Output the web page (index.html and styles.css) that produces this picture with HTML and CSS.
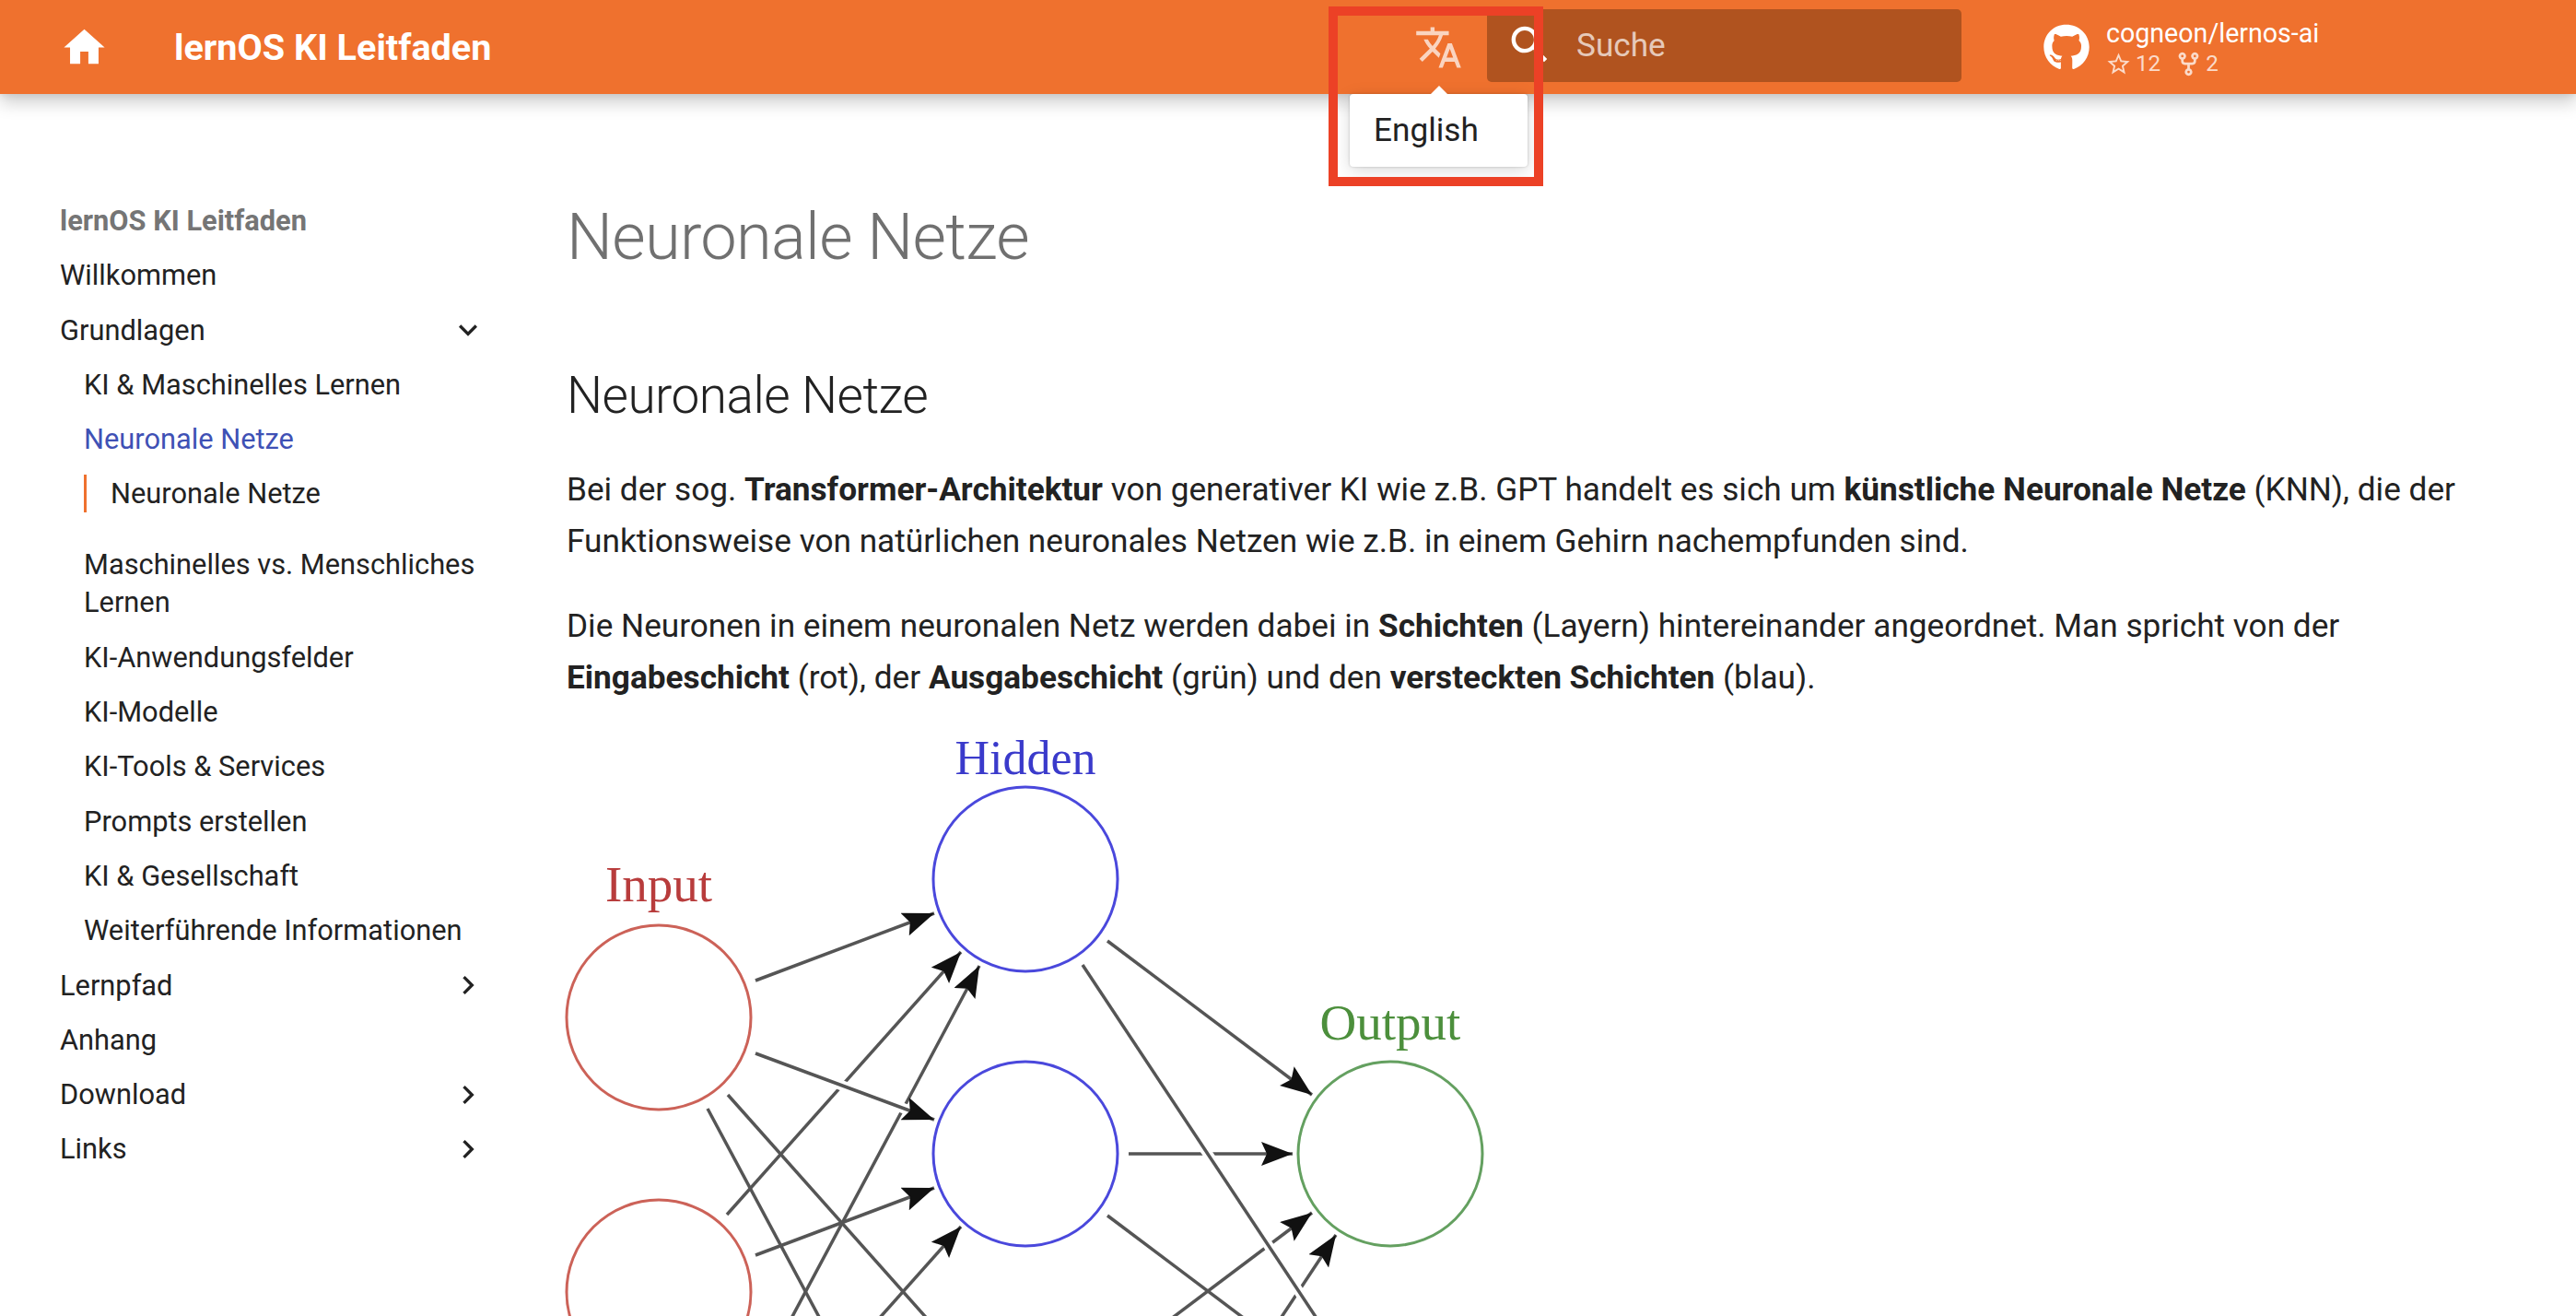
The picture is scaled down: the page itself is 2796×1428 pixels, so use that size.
FILE: index.html
```html
<!DOCTYPE html>
<html lang="de">

<head>
    <meta charset="UTF-8">
    <meta name="viewport" content="width=device-width, initial-scale=1.0">
    <title>Neuronale Netze - lernOS KI Leitfaden</title>
    <link rel="stylesheet" href="styles.css">
</head>

<body>
    <header class="header">
        <a class="home" href="#">
            <svg class="icon" viewBox="0 0 24 24"><path d="M10 20v-6h4v6h5v-8h3L12 3 2 12h3v8h5z"/></svg>
        </a>
        <div class="site-title">lernOS KI Leitfaden</div>

        <div class="lang">
            <svg class="icon" viewBox="0 0 24 24"><path d="M12.87 15.07l-2.54-2.51.03-.03c1.74-1.94 2.98-4.17 3.71-6.53H17V4h-7V2H8v2H1v1.99h11.17C11.5 7.92 10.44 9.75 9 11.35 8.07 10.32 7.3 9.19 6.69 8h-2c.73 1.63 1.73 3.17 2.98 4.56l-5.09 5.02L4 19l5-5 3.11 3.11.76-2.04zM18.5 10h-2L12 22h2l1.12-3h4.75L21 22h2l-4.5-12zm-2.62 7l1.62-4.33L19.12 17h-3.24z"/></svg>
            <div class="lang-menu">English</div>
        </div>

        <div class="search">
            <svg class="icon" viewBox="0 0 24 24"><path d="M15.5 14h-.79l-.28-.27A6.471 6.471 0 0 0 16 9.5 6.5 6.5 0 1 0 9.5 16c1.61 0 3.09-.59 4.23-1.57l.27.28v.79l5 4.99L20.49 19l-4.99-5zm-6 0C7.01 14 5 11.99 5 9.5S7.01 5 9.5 5 14 7.01 14 9.5 11.99 14 9.5 14z"/></svg>
            <span class="search-label">Suche</span>
        </div>

        <a class="repo" href="#">
            <svg class="repo-logo" viewBox="0 0 496 512"><path d="M165.9 397.4c0 2-2.3 3.6-5.2 3.6-3.3 0-5.6-1.6-5.6-3.6 0-2 2.3-3.6 5.2-3.6 3-.3 5.6 1.3 5.6 3.6zm-31.1-4.5c-.7 2 1.3 4.3 4.3 4.9 2.6 1 5.6 0 6.2-2s-1.3-4.3-4.3-5c-2.6-.7-5.5.3-6.2 2.1zm44.2-1.7c-2.9.7-4.9 2.6-4.6 4.9.3 2 2.9 3.3 5.9 2.6 2.9-.7 4.9-2.6 4.6-4.6-.3-1.9-3-3.2-5.9-2.9zM244.8 8C106.1 8 0 113.3 0 252c0 110.9 69.8 205.8 169.5 239.2 12.8 2.3 17.3-5.6 17.3-12.1 0-6.2-.3-40.4-.3-61.4 0 0-70 15-84.7-29.8 0 0-11.4-29.1-27.8-36.6 0 0-22.9-15.7 1.6-15.4 0 0 24.9 2 38.6 25.8 21.9 38.6 58.6 27.5 72.9 20.9 2.3-16 8.8-27.1 16-33.7-55.9-6.2-112.3-14.3-112.3-110.5 0-27.5 7.6-41.3 23.6-58.9-2.6-6.5-11.1-33.3 2.6-67.9 20.9-6.5 69 27 69 27 20-5.6 41.5-8.5 62.8-8.5s42.8 2.9 62.8 8.5c0 0 48.1-33.6 69-27 13.7 34.7 5.2 61.4 2.6 67.9 16 17.7 25.8 31.5 25.8 58.9 0 96.5-58.9 104.2-114.8 110.5 9.2 7.9 17 22.9 17 46.4 0 33.7-.3 75.4-.3 83.6 0 6.5 4.6 14.4 17.3 12.1C428.2 457.8 496 362.9 496 252 496 113.3 383.5 8 244.8 8z"/></svg>
            <div class="repo-info">
                <div class="repo-name">cogneon/lernos-ai</div>
                <div class="repo-facts">
                    <svg class="fact-icon" viewBox="0 0 24 24"><path d="M12 15.39l-3.76 2.27.99-4.28-3.32-2.88 4.38-.37L12 6.09l1.71 4.04 4.38.37-3.32 2.88.99 4.28M22 9.24l-7.19-.62L12 2 9.19 8.62 2 9.24l5.45 4.73L5.82 21 12 17.27 18.18 21l-1.64-7.03L22 9.24z"/></svg>
                    <span class="fact">12</span>
                    <svg class="fact-icon" viewBox="0 0 16 16"><path d="M5 5.372v.878c0 .414.336.75.75.75h4.5a.75.75 0 0 0 .75-.75v-.878a2.25 2.25 0 1 1 1.5 0v.878a2.25 2.25 0 0 1-2.25 2.25h-1.5v2.128a2.251 2.251 0 1 1-1.5 0V8.5h-1.5A2.25 2.25 0 0 1 3.5 6.25v-.878a2.25 2.25 0 1 1 1.5 0ZM5 3.25a.75.75 0 1 0-1.5 0 .75.75 0 0 0 1.5 0Zm6.75.75a.75.75 0 1 0 0-1.5.75.75 0 0 0 0 1.5Zm-3 8.75a.75.75 0 1 0-1.5 0 .75.75 0 0 0 1.5 0Z"/></svg>
                    <span class="fact">2</span>
                </div>
            </div>
        </a>
    </header>

    <!-- red marker round the language menu -->
    <div class="marker"></div>

    <div class="page">
        <nav class="sidebar">
            <div class="nav-title">lernOS KI Leitfaden</div>
            <ul class="nav">
                <li><a href="#">Willkommen</a></li>
                <li class="has-sub">
                    <a href="#">Grundlagen</a>
                    <svg class="chevron" viewBox="0 0 24 24"><path d="M7.41 8.58 12 13.17l4.59-4.59L18 10l-6 6-6-6 1.41-1.42z"/></svg>
                </li>
                <li class="sub"><a href="#">KI &amp; Maschinelles Lernen</a></li>
                <li class="sub"><a class="active" href="#">Neuronale Netze</a></li>
                <li class="sub toc"><a href="#">Neuronale Netze</a></li>
                <li class="sub after-toc"><a href="#">Maschinelles vs. Menschliches Lernen</a></li>
                <li class="sub"><a href="#">KI-Anwendungsfelder</a></li>
                <li class="sub"><a href="#">KI-Modelle</a></li>
                <li class="sub"><a href="#">KI-Tools &amp; Services</a></li>
                <li class="sub"><a href="#">Prompts erstellen</a></li>
                <li class="sub"><a href="#">KI &amp; Gesellschaft</a></li>
                <li class="sub"><a href="#">Weiterführende Informationen</a></li>
                <li class="has-sub">
                    <a href="#">Lernpfad</a>
                    <svg class="chevron" viewBox="0 0 24 24"><path d="M8.59 16.58 13.17 12 8.59 7.41 10 6l6 6-6 6-1.41-1.42z"/></svg>
                </li>
                <li><a href="#">Anhang</a></li>
                <li class="has-sub">
                    <a href="#">Download</a>
                    <svg class="chevron" viewBox="0 0 24 24"><path d="M8.59 16.58 13.17 12 8.59 7.41 10 6l6 6-6 6-1.41-1.42z"/></svg>
                </li>
                <li class="has-sub">
                    <a href="#">Links</a>
                    <svg class="chevron" viewBox="0 0 24 24"><path d="M8.59 16.58 13.17 12 8.59 7.41 10 6l6 6-6 6-1.41-1.42z"/></svg>
                </li>
            </ul>
        </nav>

        <main class="content">
            <h1>Neuronale Netze</h1>
            <h2>Neuronale Netze</h2>
            <p>Bei der sog. <strong>Transformer-Architektur</strong> von generativer KI wie z.B. GPT handelt es sich um <strong>künstliche Neuronale Netze</strong> (KNN), die der Funktionsweise von natürlichen neuronales Netzen wie z.B. in einem Gehirn nachempfunden sind.</p>
            <p>Die Neuronen in einem neuronalen Netz werden dabei in <strong>Schichten</strong> (Layern) hintereinander angeordnet. Man spricht von der <strong>Eingabeschicht</strong> (rot), der <strong>Ausgabeschicht</strong> (grün) und den <strong>versteckten Schichten</strong> (blau).</p>

            <svg class="diagram" viewBox="613 790 1000 700">
                <defs>
                    <marker id="head" markerUnits="userSpaceOnUse" markerWidth="36" markerHeight="28" refX="34" refY="13" orient="auto">
                        <path d="M0 0 L34 13 L0 26 L6 13 z" fill="#111"/>
                    </marker>
                </defs>

                <text class="label label-in" x="715" y="978">Input</text>
                <text class="label label-hid" x="1113" y="840">Hidden</text>
                <text class="label label-out" x="1509" y="1128">Output</text>

                <g class="edges">
                    <line x1="820" y1="1064" x2="1014" y2="991" marker-end="url(#head)"/>
                    <line x1="768" y1="1203" x2="1063" y2="1754"/>
                    <line x1="789" y1="1318" x2="1043" y2="1033" marker-end="url(#head)"/>
                    <line x1="768" y1="1601" x2="1063" y2="1048" marker-end="url(#head)"/>
                    <line x1="790" y1="1188" x2="1042" y2="1471"/>
                    <line class="halo" x1="820" y1="1143" x2="1014" y2="1215"/>
                    <line x1="820" y1="1143" x2="1014" y2="1215" marker-end="url(#head)"/>
                    <line x1="820" y1="1362" x2="1014" y2="1289" marker-end="url(#head)"/>
                    <line x1="789" y1="1616" x2="1043" y2="1331" marker-end="url(#head)"/>

                    <line x1="1225" y1="1252" x2="1403" y2="1252" marker-end="url(#head)"/>
                    <line x1="1202" y1="1021" x2="1424" y2="1188" marker-end="url(#head)"/>
                    <line x1="1202" y1="1319" x2="1424" y2="1486"/>
                    <line x1="1202" y1="1483" x2="1424" y2="1316" marker-end="url(#head)"/>
                    <line x1="1175" y1="1755" x2="1450" y2="1340" marker-end="url(#head)"/>
                    <line class="halo" x1="1175" y1="1047" x2="1450" y2="1462"/>
                    <line x1="1175" y1="1047" x2="1450" y2="1462"/>
                </g>

                <circle class="node node-in" cx="715" cy="1104" r="100"/>
                <circle class="node node-in" cx="715" cy="1402" r="100"/>
                <circle class="node node-hid" cx="1113" cy="954" r="100"/>
                <circle class="node node-hid" cx="1113" cy="1252" r="100"/>
                <circle class="node node-out" cx="1509" cy="1252" r="100"/>
            </svg>
        </main>
    </div>
</body>

</html>
```

FILE: styles.css
```css
html,
body {
    margin: 0;
    height: 100%;
    overflow: hidden;
}

body {
    font-family: Roboto, "Liberation Sans", sans-serif;
    color: #222;
    background-color: white;
}

a {
    color: inherit;
    text-decoration: none;
}

.header {
    display: flex;
    align-items: center;
    height: 102px;
    padding-left: 65px;
    background-color: #ef712e;
    color: white;
    box-shadow: 0 0 9px rgba(0, 0, 0, 0.1), 0 9px 18px rgba(0, 0, 0, 0.2);
    position: relative;
    z-index: 2;
}

.icon {
    display: block;
    width: 53px;
    height: 53px;
    fill: currentColor;
}

.site-title {
    flex: 0 0 1346px;
    margin-left: 71px;
    font-size: 39.6px;
    font-weight: 700;
}

.lang {
    position: relative;
    margin-right: 26px;
    color: rgba(255, 255, 255, 0.7);
}

.lang::after {
    content: "";
    position: absolute;
    left: 18px;
    top: 68px;
    border-left: 9px solid transparent;
    border-right: 9px solid transparent;
    border-bottom: 9px solid white;
}

.lang-menu {
    position: absolute;
    left: -70px;
    top: 77px;
    width: 193px;
    height: 79px;
    padding-left: 26px;
    box-sizing: border-box;
    background-color: white;
    border-radius: 4px;
    box-shadow: 0 4px 18px rgba(0, 0, 0, 0.15), 0 0 3px rgba(0, 0, 0, 0.2);
    color: #222;
    font-size: 35.2px;
    line-height: 79px;
}

.search {
    display: flex;
    align-items: center;
    width: 515px;
    height: 79px;
    padding-left: 20px;
    box-sizing: border-box;
    margin-top: -4px;
    background-color: #b0531f;
    border-radius: 5px;
}

.search .icon {
    margin-top: -2px;
}

.search-label {
    margin-left: 24px;
    font-size: 35.2px;
    color: rgba(255, 255, 255, 0.7);
}

.repo {
    display: flex;
    align-items: center;
    margin-left: 89px;
}

.repo-logo {
    width: 50px;
    height: 51px;
    fill: white;
}

.repo-info {
    margin-left: 18px;
}

.repo-name {
    font-size: 28.6px;
    line-height: 36px;
}

.repo-facts {
    display: flex;
    align-items: center;
    margin-left: -1px;
    font-size: 24.2px;
    line-height: 30px;
    color: rgba(255, 255, 255, 0.75);
}

.fact-icon {
    width: 29px;
    height: 29px;
    fill: currentColor;
}

.fact {
    margin-left: 4px;
    margin-right: 16px;
}

.marker {
    position: absolute;
    left: 1442px;
    top: 7px;
    width: 233px;
    height: 195px;
    box-sizing: border-box;
    border: 10px solid #ec4126;
    z-index: 3;
}

.page {
    display: flex;
}

.sidebar {
    width: 550px;
    flex-shrink: 0;
    padding: 117px 0 0 65px;
    box-sizing: border-box;
    font-size: 30.8px;
    line-height: 41px;
}

.nav-title {
    font-weight: 700;
    color: #757575;
}

.nav {
    list-style: none;
    margin: 0;
    padding: 0;
    width: 462px;
}

.nav li {
    margin-top: 18.3px;
}

.has-sub {
    display: flex;
    justify-content: space-between;
    align-items: center;
}

.chevron {
    width: 40px;
    height: 40px;
    margin-right: -1px;
    fill: #222;
}

.nav .sub {
    margin-left: 26px;
}

.active {
    color: #3f51b5;
}

.nav .toc {
    border-left: 3px solid #ef712e;
    padding-left: 26px;
}

.nav .after-toc {
    margin-top: 36px;
}

.content {
    flex: 1;
    padding: 0 60px 0 65px;
}

h1 {
    margin: 110px 0 0;
    font-size: 70.4px;
    font-weight: 300;
    letter-spacing: -0.01em;
    line-height: 1.3;
    color: #707070;
}

h2 {
    margin: 87px 0 0;
    font-size: 55px;
    font-weight: 300;
    letter-spacing: -0.01em;
    line-height: 1.4;
    color: #222;
}

p {
    margin: 35px 0 0;
    font-size: 35.2px;
    line-height: 56.5px;
}

.diagram {
    display: block;
    width: 1000px;
    height: 700px;
    margin: 26px 0 0 -2px;
}

.label {
    font-family: "Liberation Serif", serif;
    font-size: 52px;
    text-anchor: middle;
}

.label-in {
    font-size: 55px;
    fill: #b83c3c;
}

.label-hid {
    fill: #3a3acb;
}

.label-out {
    font-size: 55px;
    fill: #4c8f3c;
}

.edges line {
    stroke: #555;
    stroke-width: 3.5;
}

.edges .halo {
    stroke: white;
    stroke-width: 11;
}

.node {
    fill: none;
    stroke-width: 3;
}

.node-in {
    stroke: #cc6258;
}

.node-hid {
    stroke: #4a48dc;
}

.node-out {
    stroke: #64a060;
}
```
